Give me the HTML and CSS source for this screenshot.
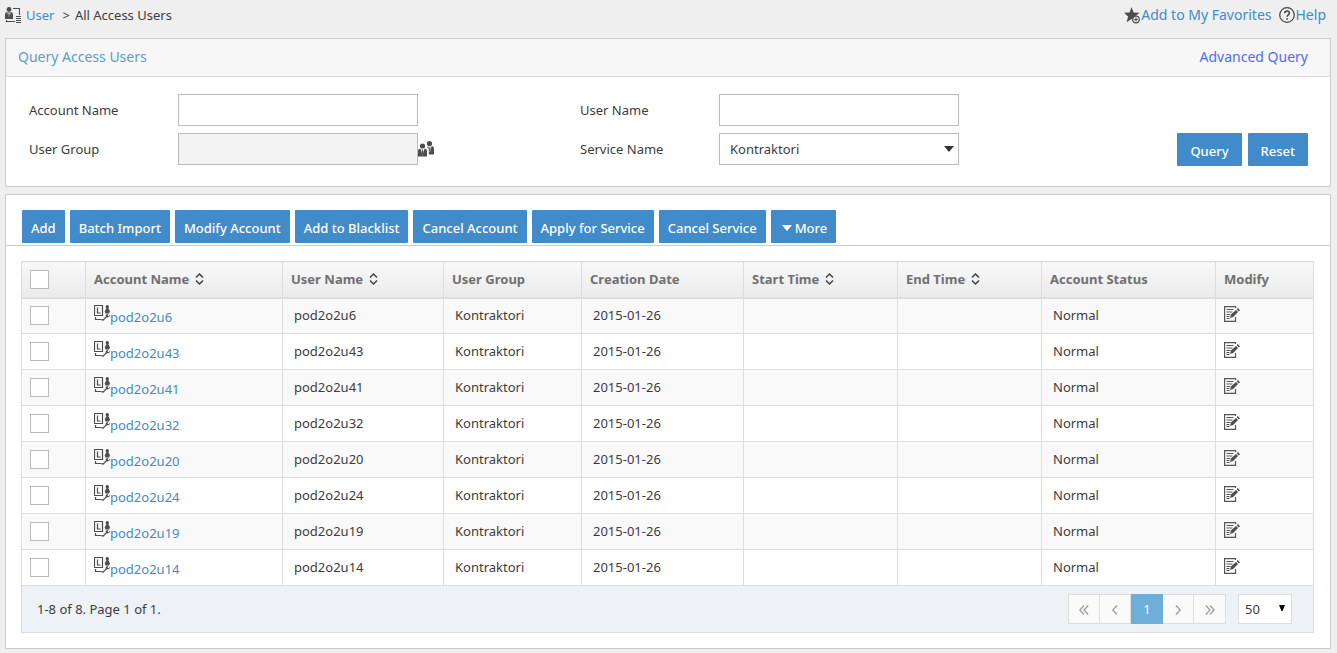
FILE: index.html
```html
<!DOCTYPE html>
<html lang="en">
<head>
<meta charset="utf-8">
<title>All Access Users</title>
<link rel="stylesheet" href="styles.css">
</head>
<body>
<svg class="sprite" aria-hidden="true">
  <symbol id="icon-sort" viewBox="0 0 9 12"><path d="M1 4.5 4.5 1 8 4.5M1 7.5 4.5 11 8 7.5" fill="none" stroke="#444" stroke-width="1.500"/></symbol>
  <symbol id="icon-account" viewBox="0 0 16 16"><path d="M.5.5h8v10h-8zM3.500 2.500v5.500H6.500M1.500 12v2.500h6" fill="none" stroke="#4d4d4d" stroke-width="1.200"/><circle cx="13.300" cy="1.700" r="1.700" fill="#4d4d4d"/><path d="M12.500 3h1.800l1.700 3.500-1 2h-3.500l-.8-2zM15.900 9.500c.3 1.900-1.200 3.100-3.100 2.700l-2.300 2.200c-.9 1.500-2.600 1.800-3.300.4l2.500-1 2-2.300c-.2-1.600.9-2.700 2.500-2.400l-.7 1.500 1 .7z" fill="#4d4d4d"/></symbol>
  <symbol id="icon-edit" viewBox="0 0 16 16"><path d="M11.500 2V.600H.600v14.800h10.900V11M2.500 3.500h7M2.500 6h6M2.500 8.500h4M2.500 10.500h3M2.500 12.500h3" fill="none" stroke="#555" stroke-width="1.200"/><path d="m6 12 1-3.500L12 4l2 2-4.800 5zM12.700 3.200l1.100-1.100 2.200 2.100-1.200 1.200z" fill="#4d4d4d"/></symbol>
</svg>
<header class="topbar">
  <nav class="crumbs">
    <svg class="icon-16" viewBox="0 0 16 16"><circle cx="4" cy="2.500" r="2.400" fill="#4d4d4d"/><path d="M0 12V7.500Q0 5 2 5h4q2 0 2 2.500V12z" fill="#4d4d4d"/><path d="m2.200 5.500 1.800 5 1.800-5z" fill="#eee"/><path d="M3.600 6h.8l.4 3-.8 1.400-.8-1.400z" fill="#4d4d4d"/><path d="M8 1.500h6.500V8M1.500 13v1.500H10M11 9.500h5M11 11.500h5M11 13.500h5M11 15.500h5" fill="none" stroke="#4d4d4d" stroke-width="1.100"/></svg>
    <a href="#">User</a><span class="crumb-sep">&gt;</span><span>All Access Users</span>
  </nav>
  <div class="top-links">
    <a href="#"><svg class="icon-16" viewBox="0 0 16 16"><path d="m7.500 0 2.100 5.400 5.900.3-4.600 3.700 1.500 5.800-4.900-3.300-4.900 3.300 1.500-5.800L0 5.700l5.600-.3z" fill="#4d4d4d"/><circle cx="12" cy="12.500" r="3.300" fill="#efefef" stroke="#4d4d4d" stroke-width="1.200"/><path d="M12 10.700v3.600M10.200 12.500h3.600" stroke="#4d4d4d" stroke-width="1.200"/></svg>Add to My Favorites</a>
    <a href="#"><svg class="icon-16" viewBox="0 0 16 16"><circle cx="8" cy="8" r="7.300" fill="none" stroke="#444" stroke-width="1.200"/><path d="M5.700 6.300c0-3.200 4.700-3 4.700-.2 0 1.800-2.300 1.700-2.300 3.700" fill="none" stroke="#444" stroke-width="1.500"/><circle cx="8.100" cy="11.900" r=".9" fill="#444"/></svg>Help</a>
  </div>
</header>
<main class="content">
  <section class="panel">
    <div class="panel-head"><h1>Query Access Users</h1><a href="#">Advanced Query</a></div>
    <form class="query">
      <label for="account">Account Name</label>
      <div class="field"><input id="account" type="text"></div>
      <label for="username">User Name</label>
      <div class="field"><input id="username" type="text"></div>
      <label class="row-start" for="group">User Group</label>
      <div class="field"><input id="group" type="text" readonly><button type="button" class="pick" aria-label="Select user group"><svg class="icon-16" viewBox="0 0 16 16"><circle cx="4.500" cy="5" r="2.600" fill="#4d4d4d"/><circle cx="11.500" cy="2.600" r="2.600" fill="#4d4d4d"/><path d="M0 15.500V10q0-2.300 2-2.300h5q2 0 2 2.300v5.500zM10 5.300h4q2 0 2 2v6.200h-5.200V9q0-1.800-1.600-2.600z" fill="#4d4d4d"/><path d="m2.500 7.700 2 6.800 2-6.800zM10.200 5.300l1.700 6.200 1.700-6.200z" fill="#fff"/><path d="M4 8.500h1l.5 3.500-1 2-1-2zM11.500 6h.8l.4 3-.8 1.500-.8-1.500z" fill="#4d4d4d"/></svg></button></div>
      <label for="service">Service Name</label>
      <div class="field select-wrap"><select id="service"><option>Kontraktori</option></select><svg class="caret" viewBox="0 0 10 6"><path d="M0 0h10L5 6z" fill="#333"/></svg></div>
      <div class="query-actions"><button type="submit" class="btn">Query</button><button type="reset" class="btn">Reset</button></div>
    </form>
  </section>
  <section class="panel">
    <div class="toolbar">
      <button class="btn">Add</button><button class="btn">Batch Import</button><button class="btn">Modify Account</button><button class="btn">Add to Blacklist</button><button class="btn">Cancel Account</button><button class="btn">Apply for Service</button><button class="btn">Cancel Service</button><button class="btn"><svg class="more-caret" viewBox="0 0 10 6"><path d="M0 0h10L5 6z" fill="#fff"/></svg>More</button>
    </div>
    <div class="grid">
      <table>
        <colgroup><col class="c-check"><col class="c-account"><col class="c-user"><col class="c-group"><col class="c-date"><col class="c-start"><col class="c-end"><col class="c-status"><col></colgroup>
        <thead><tr>
          <th><input type="checkbox" aria-label="Select all"></th>
          <th>Account Name<svg class="sort"><use href="#icon-sort"/></svg></th>
          <th>User Name<svg class="sort"><use href="#icon-sort"/></svg></th>
          <th>User Group</th><th>Creation Date</th>
          <th>Start Time<svg class="sort"><use href="#icon-sort"/></svg></th>
          <th>End Time<svg class="sort"><use href="#icon-sort"/></svg></th>
          <th>Account Status</th><th>Modify</th>
        </tr></thead>
        <tbody>
          <tr><td><input type="checkbox" aria-label="Select pod2o2u6"></td><td><a class="account" href="#"><svg class="icon-16"><use href="#icon-account"/></svg><span>pod2o2u6</span></a></td><td>pod2o2u6</td><td>Kontraktori</td><td>2015-01-26</td><td></td><td></td><td>Normal</td><td><a class="edit" href="#" aria-label="Modify pod2o2u6"><svg class="icon-16"><use href="#icon-edit"/></svg></a></td></tr>
          <tr><td><input type="checkbox" aria-label="Select pod2o2u43"></td><td><a class="account" href="#"><svg class="icon-16"><use href="#icon-account"/></svg><span>pod2o2u43</span></a></td><td>pod2o2u43</td><td>Kontraktori</td><td>2015-01-26</td><td></td><td></td><td>Normal</td><td><a class="edit" href="#" aria-label="Modify pod2o2u43"><svg class="icon-16"><use href="#icon-edit"/></svg></a></td></tr>
          <tr><td><input type="checkbox" aria-label="Select pod2o2u41"></td><td><a class="account" href="#"><svg class="icon-16"><use href="#icon-account"/></svg><span>pod2o2u41</span></a></td><td>pod2o2u41</td><td>Kontraktori</td><td>2015-01-26</td><td></td><td></td><td>Normal</td><td><a class="edit" href="#" aria-label="Modify pod2o2u41"><svg class="icon-16"><use href="#icon-edit"/></svg></a></td></tr>
          <tr><td><input type="checkbox" aria-label="Select pod2o2u32"></td><td><a class="account" href="#"><svg class="icon-16"><use href="#icon-account"/></svg><span>pod2o2u32</span></a></td><td>pod2o2u32</td><td>Kontraktori</td><td>2015-01-26</td><td></td><td></td><td>Normal</td><td><a class="edit" href="#" aria-label="Modify pod2o2u32"><svg class="icon-16"><use href="#icon-edit"/></svg></a></td></tr>
          <tr><td><input type="checkbox" aria-label="Select pod2o2u20"></td><td><a class="account" href="#"><svg class="icon-16"><use href="#icon-account"/></svg><span>pod2o2u20</span></a></td><td>pod2o2u20</td><td>Kontraktori</td><td>2015-01-26</td><td></td><td></td><td>Normal</td><td><a class="edit" href="#" aria-label="Modify pod2o2u20"><svg class="icon-16"><use href="#icon-edit"/></svg></a></td></tr>
          <tr><td><input type="checkbox" aria-label="Select pod2o2u24"></td><td><a class="account" href="#"><svg class="icon-16"><use href="#icon-account"/></svg><span>pod2o2u24</span></a></td><td>pod2o2u24</td><td>Kontraktori</td><td>2015-01-26</td><td></td><td></td><td>Normal</td><td><a class="edit" href="#" aria-label="Modify pod2o2u24"><svg class="icon-16"><use href="#icon-edit"/></svg></a></td></tr>
          <tr><td><input type="checkbox" aria-label="Select pod2o2u19"></td><td><a class="account" href="#"><svg class="icon-16"><use href="#icon-account"/></svg><span>pod2o2u19</span></a></td><td>pod2o2u19</td><td>Kontraktori</td><td>2015-01-26</td><td></td><td></td><td>Normal</td><td><a class="edit" href="#" aria-label="Modify pod2o2u19"><svg class="icon-16"><use href="#icon-edit"/></svg></a></td></tr>
          <tr><td><input type="checkbox" aria-label="Select pod2o2u14"></td><td><a class="account" href="#"><svg class="icon-16"><use href="#icon-account"/></svg><span>pod2o2u14</span></a></td><td>pod2o2u14</td><td>Kontraktori</td><td>2015-01-26</td><td></td><td></td><td>Normal</td><td><a class="edit" href="#" aria-label="Modify pod2o2u14"><svg class="icon-16"><use href="#icon-edit"/></svg></a></td></tr>
        </tbody>
      </table>
      <div class="grid-foot">
        <span>1-8 of 8. Page 1 of 1.</span>
        <div class="pager">
          <button aria-label="First page"><svg viewBox="0 0 10 10"><path d="M5 .5.800 5 5 9.500M9.200.5 5 5l4.200 4.500"/></svg></button>
          <button aria-label="Previous page"><svg viewBox="0 0 10 10"><path d="M7 .5 2.800 5 7 9.500"/></svg></button>
          <button class="current">1</button>
          <button aria-label="Next page"><svg viewBox="0 0 10 10"><path d="M3 .5 7.200 5 3 9.500"/></svg></button>
          <button aria-label="Last page"><svg viewBox="0 0 10 10"><path d="M.800.5 5 5 .800 9.500M5 .5 9.200 5 5 9.500"/></svg></button>
        </div>
        <div class="page-size select-wrap"><select aria-label="Rows per page"><option>50</option></select><svg class="caret" viewBox="0 0 6 6"><path d="M0 0h6L3.500 6h-1z" fill="#000"/></svg></div>
      </div>
    </div>
  </section>
</main>
</body>
</html>
```

FILE: styles.css
```css
* { box-sizing: border-box; }
body {
  margin: 0;
  background: #efefef;
  color: #3c3c3c;
  font-family: "Noto Sans", "Open Sans", sans-serif;
  font-size: 13px;
  line-height: 18px;
}
a { color: #428bca; text-decoration: none; }
button, input, select { font: inherit; color: inherit; margin: 0; }
.sprite { display: none; }
.icon-16 { width: 16px; height: 16px; flex: none; display: block; overflow: visible; }

.topbar { display: flex; justify-content: space-between; height: 38px; padding: 6px 11px 0 5px; }
.crumbs, .top-links, .top-links a { display: flex; align-items: center; }
.crumbs, .top-links { height: 18px; }
.crumbs .icon-16 { margin-right: 5px; }
.crumb-sep { margin: 0 5px 0 8px; }
.top-links { gap: 7px; font-size: 14px; }
.top-links a { gap: 1px; }

.content { display: flex; flex-direction: column; gap: 7px; padding: 0 6px 4px 5px; }
.panel { background: #fff; border: 1px solid #ccc; }
.panel-head {
  display: flex;
  align-items: center;
  justify-content: space-between;
  height: 38px;
  padding: 0 22px 2px 12px;
  background: #f7f7f7;
  border-bottom: 1px solid #ddd;
  font-size: 14px;
}
.panel-head h1 { margin: 0; font-size: 14px; font-weight: 400; color: #5b9cce; }
.panel-head a { color: #4b6cff; }

.query {
  display: grid;
  grid-template-columns: 149px 402px 139px 240px 1fr;
  row-gap: 7px;
  align-items: center;
  padding: 17px 22px 21px 23px;
}
.row-start { grid-column: 1; }
.field { display: flex; align-items: center; height: 32px; }
.field input, .field select {
  width: 240px;
  height: 32px;
  padding: 0 10px;
  border: 1px solid #bbb;
  border-radius: 0;
  background: #fff;
}
.field input[readonly] { background: #f4f4f4; }
.pick { padding: 0; border: 0; background: none; }
.select-wrap { position: relative; }
select { appearance: none; }
.caret { position: absolute; right: 5px; top: 13px; width: 10px; height: 6px; pointer-events: none; }
.query-actions { display: flex; justify-content: flex-end; gap: 6px; height: 32px; }
.btn {
  height: 33px;
  padding: 3px 9px 0;
  border: 0;
  border-radius: 1px;
  background: #428bca;
  color: #fff;
  font-weight: 500;
  white-space: nowrap;
}
.query-actions .btn { padding: 3px 13px 0; }

.toolbar { display: flex; gap: 5px; padding: 15px 16px 2px; border-bottom: 1px solid #ccc; }
.more-caret { width: 10px; height: 6px; margin: 0 3px 2px 2px; }

.grid { margin: 15px 16px 15px 15px; }
table { width: 100%; border-collapse: collapse; table-layout: fixed; }
.c-check { width: 64px; }
.c-account { width: 197px; }
.c-user { width: 161px; }
.c-group { width: 138px; }
.c-date { width: 162px; }
.c-start { width: 154px; }
.c-end { width: 144px; }
.c-status { width: 174px; }
th, td { height: 36px; padding: 0 8px; border: 1px solid #ddd; text-align: left; }
td { padding: 0 11px 2px; }
th {
  background: linear-gradient(#f8f8f8, #ebebeb);
  border-bottom: 2px solid #ddd;
  color: #707070;
  font-weight: 700;
}
tbody tr:nth-child(odd) { background: #f9f9f9; }
td:first-child, td:nth-child(2) { padding: 0 8px; }
td:last-child { padding: 0 8px 3px; }
input[type="checkbox"] {
  appearance: none;
  display: block;
  width: 19px;
  height: 19px;
  border: 1px solid #bbb;
  background: #fff;
}
.sort { width: 9px; height: 12px; margin-left: 6px; vertical-align: -1px; }
.account { display: flex; align-items: flex-start; }
.account span { padding-top: 3px; }
.edit { display: block; width: 16px; }

.grid-foot {
  display: flex;
  align-items: center;
  height: 47px;
  padding: 0 21px 0 15px;
  border: 1px solid #ddd;
  border-top: 0;
  background: #eef2f7;
}
.pager { display: flex; margin-left: auto; border: 1px solid #ddd; }
.pager button {
  width: 31px;
  height: 28px;
  padding: 0;
  border: 0;
  border-right: 1px solid #ddd;
  background: #fafafa;
}
.pager button:last-child { border-right: 0; }
.pager .current { width: 32px; height: 30px; margin: -1px 0; border: 0; background: #6faed9; color: #fff; }
.pager svg { width: 10px; height: 10px; fill: none; stroke: #999; stroke-width: 1.2; vertical-align: -1px; }
.page-size { margin-left: 12px; }
.page-size select { display: block; width: 54px; height: 30px; padding: 0 6px; border: 1px solid #ddd; border-radius: 0; background: #fff; }
.page-size .caret { right: 7px; top: 11px; width: 6px; height: 6px; }
```
